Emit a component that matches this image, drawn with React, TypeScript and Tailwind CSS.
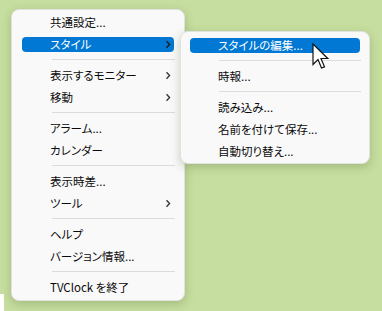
import React from 'react'

type Entry = { label: string; sub?: boolean; active?: boolean } | 'sep'

const mainItems: Entry[] = [
  { label: '共通設定...' },
  { label: 'スタイル', sub: true, active: true },
  'sep',
  { label: '表示するモニター', sub: true },
  { label: '移動', sub: true },
  'sep',
  { label: 'アラーム...' },
  { label: 'カレンダー' },
  'sep',
  { label: '表示時差...' },
  { label: 'ツール', sub: true },
  'sep',
  { label: 'ヘルプ' },
  { label: 'バージョン情報...' },
  'sep',
  { label: 'TVClock を終了' },
]

const styleItems: Entry[] = [
  { label: 'スタイルの編集...', active: true },
  'sep',
  { label: '時報...' },
  'sep',
  { label: '読み込み...' },
  { label: '名前を付けて保存...' },
  { label: '自動切り替え...' },
]

function Chevron({ active }: { active?: boolean }) {
  return (
    <svg width="6" height="9" viewBox="0 0 6 9" className="shrink-0">
      <path d="M1.5 1.2 L4.6 4.5 L1.5 7.8" fill="none" stroke={active ? '#1a1a1a' : '#333'} strokeWidth="1.3" />
    </svg>
  )
}

function MenuRow({ entry, inset }: { entry: Entry; inset: number }) {
  if (entry === 'sep') {
    return (
      <div className="h-[9px] flex items-center">
        <div className={inset === 10 ? 'ml-[40px] mr-[9px] h-px flex-1 bg-[#dcdcdc]' : 'ml-[38px] mr-[8px] h-px flex-1 bg-[#dcdcdc]'} />
      </div>
    )
  }
  return (
    <div className={inset === 10 ? 'h-[22px] flex items-center px-[10px]' : 'h-[22px] flex items-center px-[9px]'}>
      <div
        className={
          entry.active
            ? 'h-[15px] flex-1 flex items-center rounded-[4px] bg-[#0078d4] text-white pl-[28px] pr-[3px]'
            : 'h-[15px] flex-1 flex items-center pl-[28px] pr-[3px] text-[#0a0a0a]'
        }
      >
        <span className="flex-1 whitespace-nowrap">{entry.label}</span>
        {entry.sub && <Chevron active={entry.active} />}
      </div>
    </div>
  )
}

export default function App() {
  return (
    <div
      className="relative w-[382px] h-[311px] overflow-hidden bg-[#c6de9f] pt-[9px] pl-[11px] text-[11.5px] leading-[15px] [font-feature-settings:'palt']"
      style={{ fontFamily: '"Noto Sans CJK JP", "Noto Sans", sans-serif' }}
    >
      {/* bottom-left stray patch */}
      <div className="absolute left-0 bottom-0 w-[4px] h-[17px] bg-white" />

      {/* main menu */}
      <div className="relative w-[174px] rounded-[8px] bg-[#f9f9f9] border border-[#e2e2e2] shadow-[0_3px_10px_rgba(60,80,30,0.25)] pt-[1px] pb-[2px]">
        {mainItems.map((e, i) => (
          <MenuRow key={i} entry={e} inset={10} />
        ))}

        {/* style submenu */}
        <div className="absolute left-[168px] top-[21px] w-[190px] rounded-[8px] bg-[#f9f9f9] border border-[#e2e2e2] shadow-[0_3px_10px_rgba(60,80,30,0.25)] pt-[2px] pb-[1px]">
          {styleItems.map((e, i) => (
            <MenuRow key={i} entry={e} inset={9} />
          ))}
        </div>
      </div>

      {/* mouse cursor */}
      <svg className="absolute left-[312px] top-[43px]" width="18" height="27" viewBox="0 0 18 27">
        <path
          d="M1 1 L1 21.5 L6 16.5 L9.5 25 L12.5 23.8 L9 15.5 L15.8 15.5 Z"
          fill="white"
          stroke="#111"
          strokeWidth="1.2"
          strokeLinejoin="miter"
        />
      </svg>
    </div>
  )
}
